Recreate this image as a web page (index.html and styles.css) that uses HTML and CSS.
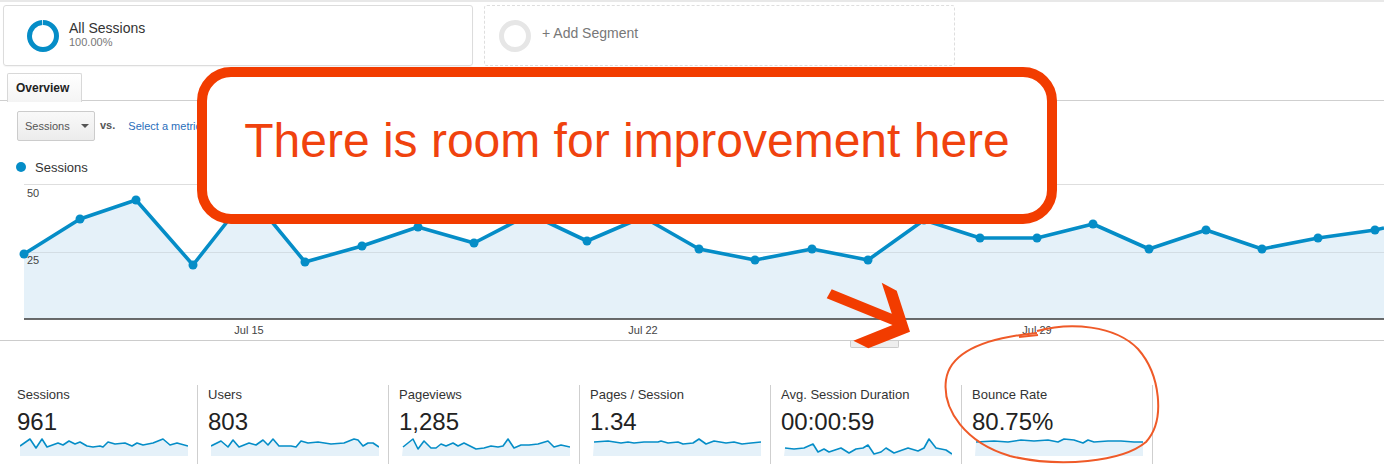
FILE: index.html
```html
<!DOCTYPE html>
<html>
<head>
<meta charset="utf-8">
<title>Audience Overview</title>
<link rel="stylesheet" href="styles.css">
</head>
<body>
<div class="page">
  <div class="segments">
    <div class="seg seg-active">
      <svg class="donut" width="32" height="32" viewBox="0 0 32 32"><circle cx="16" cy="16" r="13.5" fill="none" stroke="#058dc7" stroke-width="5" stroke-dasharray="83.5 1.3" transform="rotate(-90 16 16)"/></svg>
      <div class="seg-text">
        <div class="seg-name">All Sessions</div>
        <div class="seg-pct">100.00%</div>
      </div>
    </div>
    <div class="seg seg-add">
      <svg class="donut" width="32" height="32" viewBox="0 0 32 32"><circle cx="16" cy="16" r="13.5" fill="none" stroke="#e6e6e6" stroke-width="5"/></svg>
      <span class="seg-add-label">+ Add Segment</span>
    </div>
  </div>

  <div class="tabs"><div class="tab">Overview</div></div>

  <div class="controls">
    <div class="select"><span>Sessions</span><span class="caret"></span></div>
    <span class="vs">vs.</span>
    <span class="metric-link">Select a metric</span>
  </div>

  <div class="legend"><span class="dot"></span>Sessions</div>

  <svg class="chart" width="1384" height="160" viewBox="0 0 1384 160">
    <line x1="24" y1="4.5" x2="1384" y2="4.5" stroke="#dedede" stroke-width="1"/>
    <polygon fill="#e5f1f9" points="24,139 24,74 80,39 136,20 193,85 249,14 305,82 362,66 418,47 474,63 530,34 587,61 643,37 699,69 755,80 812,69 868,80 924,40 980,58 1037,58 1093,44 1149,69 1206,50 1262,69 1318,58 1375,50 1384,48 1384,139"/>
    <line x1="24" y1="72.5" x2="1384" y2="72.5" stroke="#d3dde4" stroke-width="1"/>
    <line x1="24" y1="139" x2="1384" y2="139" stroke="#3a3a3a" stroke-width="1.6"/>
    <polyline fill="none" stroke="#058dc7" stroke-width="3.6" stroke-linejoin="round" points="24,74 80,39 136,20 193,85 249,14 305,82 362,66 418,47 474,63 530,34 587,61 643,37 699,69 755,80 812,69 868,80 924,40 980,58 1037,58 1093,44 1149,69 1206,50 1262,69 1318,58 1375,50 1384,48"/>
    <g fill="#058dc7">
      <circle cx="24" cy="74" r="4.5"/><circle cx="80" cy="39" r="4.5"/><circle cx="136" cy="20" r="4.5"/><circle cx="193" cy="85" r="4.5"/><circle cx="249" cy="14" r="4.5"/><circle cx="305" cy="82" r="4.5"/><circle cx="362" cy="66" r="4.5"/><circle cx="418" cy="47" r="4.5"/><circle cx="474" cy="63" r="4.5"/><circle cx="530" cy="34" r="4.5"/><circle cx="587" cy="61" r="4.5"/><circle cx="643" cy="37" r="4.5"/><circle cx="699" cy="69" r="4.5"/><circle cx="755" cy="80" r="4.5"/><circle cx="812" cy="69" r="4.5"/><circle cx="868" cy="80" r="4.5"/><circle cx="924" cy="40" r="4.5"/><circle cx="980" cy="58" r="4.5"/><circle cx="1037" cy="58" r="4.5"/><circle cx="1093" cy="44" r="4.5"/><circle cx="1149" cy="69" r="4.5"/><circle cx="1206" cy="50" r="4.5"/><circle cx="1262" cy="69" r="4.5"/><circle cx="1318" cy="58" r="4.5"/><circle cx="1375" cy="50" r="4.5"/>
    </g>
    <g class="axis-text">
      <text x="27" y="17">50</text>
      <text x="27" y="84">25</text>
      <text x="249" y="154" text-anchor="middle">Jul 15</text>
      <text x="643" y="154" text-anchor="middle">Jul 22</text>
      <text x="1037" y="154" text-anchor="middle">Jul 29</text>
    </g>
  </svg>
  <div class="chart-foot"><div class="handle"></div></div>

  <div class="metrics">
    <div class="metric">
      <div class="m-label">Sessions</div>
      <div class="m-value">961</div>
      <svg class="spark" width="168" height="20" viewBox="0 0 168 20">
        <polygon class="spark-fill" points="0,20 0,10 10,3 16,12 22,3 27,11 38,7 43,9 49,5 55,8 60,6 67,10 73,11 80,10 83,11 88,6 95,8 105,7 112,10 117,7 123,9 133,7 143,3 150,9 157,7 168,10 168,20"/>
        <polyline class="spark-line" points="0,10 10,3 16,12 22,3 27,11 38,7 43,9 49,5 55,8 60,6 67,10 73,11 80,10 83,11 88,6 95,8 105,7 112,10 117,7 123,9 133,7 143,3 150,9 157,7 168,10"/>
      </svg>
    </div>
    <div class="metric">
      <div class="m-label">Users</div>
      <div class="m-value">803</div>
      <svg class="spark" width="168" height="20" viewBox="0 0 168 20">
        <polygon class="spark-fill" points="0,20 0,10 10,5 17,11 22,4 28,11 38,7 45,9 52,4 57,9 62,3 68,10 80,10 85,11 90,5 97,7 107,6 120,8 133,7 143,3 147,4 152,10 157,7 162,7 168,11 168,20"/>
        <polyline class="spark-line" points="0,10 10,5 17,11 22,4 28,11 38,7 45,9 52,4 57,9 62,3 68,10 80,10 85,11 90,5 97,7 107,6 120,8 133,7 143,3 147,4 152,10 157,7 162,7 168,11"/>
      </svg>
    </div>
    <div class="metric">
      <div class="m-label">Pageviews</div>
      <div class="m-value">1,285</div>
      <svg class="spark" width="168" height="20" viewBox="0 0 168 20">
        <polygon class="spark-fill" points="0,20 1,11 11,3 16,13 22,5 29,12 34,12 39,8 44,10 51,7 56,10 62,7 74,13 82,12 89,10 96,11 101,10 106,3 112,12 119,9 127,9 136,8 146,5 152,11 159,9 168,11 168,20"/>
        <polyline class="spark-line" points="1,11 11,3 16,13 22,5 29,12 34,12 39,8 44,10 51,7 56,10 62,7 74,13 82,12 89,10 96,11 101,10 106,3 112,12 119,9 127,9 136,8 146,5 152,11 159,9 168,11"/>
      </svg>
    </div>
    <div class="metric">
      <div class="m-label">Pages / Session</div>
      <div class="m-value">1.34</div>
      <svg class="spark" width="168" height="20" viewBox="0 0 168 20">
        <polygon class="spark-fill" points="0,20 1,6 15,5 28,7 35,6 41,7 51,6 65,6 68,5 75,7 85,6 90,8 100,7 106,3 113,8 121,5 133,7 141,6 149,8 158,7 168,6 168,20"/>
        <polyline class="spark-line" points="1,6 15,5 28,7 35,6 41,7 51,6 65,6 68,5 75,7 85,6 90,8 100,7 106,3 113,8 121,5 133,7 141,6 149,8 158,7 168,6"/>
      </svg>
    </div>
    <div class="metric">
      <div class="m-label">Avg. Session Duration</div>
      <div class="m-value">00:00:59</div>
      <svg class="spark" width="168" height="20" viewBox="0 0 168 20">
        <polygon class="spark-fill" points="0,20 1,12 10,13 20,12 29,8 34,16 40,13 45,16 57,12 65,17 72,13 79,12 84,9 90,18 97,16 102,12 110,17 124,12 134,15 140,12 145,3 152,12 162,14 168,18 168,20"/>
        <polyline class="spark-line" points="1,12 10,13 20,12 29,8 34,16 40,13 45,16 57,12 65,17 72,13 79,12 84,9 90,18 97,16 102,12 110,17 124,12 134,15 140,12 145,3 152,12 162,14 168,18"/>
      </svg>
    </div>
    <div class="metric">
      <div class="m-label">Bounce Rate</div>
      <div class="m-value">80.75%</div>
      <svg class="spark" width="168" height="20" viewBox="0 0 168 20">
        <polygon class="spark-fill" points="0,20 1,6 19,5 33,6 46,4 59,5 73,4 83,6 89,3 99,4 108,7 113,4 119,6 133,5 146,5 159,6 168,6 168,20"/>
        <polyline class="spark-line" points="1,6 19,5 33,6 46,4 59,5 73,4 83,6 89,3 99,4 108,7 113,4 119,6 133,5 146,5 159,6 168,6"/>
      </svg>
    </div>
  </div>

  <div class="callout">There is room for improvement here</div>

  <svg class="annot" width="1384" height="476" viewBox="0 0 1384 476">
    <polygon fill="#f23c00" points="831.7,289.3 891.8,313.7 881.7,282.7 896.7,290.7 910,331.7 868.3,348.3 853.3,340.7 892.5,325.1 826.7,298.3"/>
    <path d="M1037 331 C1070 322 1115 325 1138 349 C1160 374 1166 420 1146 442 C1122 462 1060 468 1010 456 C966 443 942 410 946 380 C950 352 985 338 1037 333" fill="none" stroke="#ef5a28" stroke-width="2"/>
    <path d="M1019 337 L1038 335" fill="none" stroke="#ef5a28" stroke-width="2"/>
  </svg>
</div>
</body>
</html>
```

FILE: styles.css
```css
* { box-sizing: border-box; }

html, body {
  margin: 0;
  padding: 0;
  background: #ffffff;
}

body {
  width: 1384px;
  height: 476px;
  overflow: hidden;
  font-family: "Liberation Sans", Arial, sans-serif;
  color: #333;
}

.page {
  position: relative;
  width: 1384px;
  height: 476px;
  border-top: 2px solid #e8e8e8;
}

/* Segments */
.segments {
  display: flex;
  gap: 11px;
  padding: 3px 0 0 3px;
}

.seg {
  height: 61px;
  display: flex;
  align-items: center;
  border-radius: 3px;
}

.seg-active {
  width: 470px;
  border: 1px solid #dcdcdc;
  padding-left: 23px;
  gap: 10px;
  box-shadow: 0 1px 1px rgba(0,0,0,0.04);
}

.seg-add {
  width: 471px;
  border: 1px dashed #dedede;
  padding-left: 14px;
  gap: 11px;
}

.donut { display: block; flex: none; }

.seg-text { margin-top: -3px; }

.seg-name {
  font-size: 14px;
  line-height: 16px;
  color: #333;
}

.seg-pct {
  font-size: 11px;
  line-height: 13px;
  color: #777;
}

.seg-add-label {
  font-size: 14px;
  color: #777;
  margin-top: -5px;
}

/* Tabs */
.tabs {
  margin-top: 6px;
  padding-left: 7px;
  border-bottom: 1px solid #cfcfcf;
  height: 29px;
}

.tab {
  width: 75px;
  height: 29px;
  border: 1px solid #d8d8d8;
  border-bottom: none;
  border-radius: 2px 2px 0 0;
  background: linear-gradient(#ffffff, #f4f4f4);
  padding: 7px 0 0 8px;
  font-size: 12px;
  font-weight: bold;
  color: #222;
  position: relative;
  top: 1px;
}

/* Controls */
.controls {
  display: flex;
  align-items: center;
  margin: 10px 0 0 17px;
  height: 30px;
}

.select {
  width: 78px;
  height: 30px;
  border: 1px solid #cccccc;
  border-radius: 2px;
  background: linear-gradient(#f9f9f9, #ececec);
  display: flex;
  align-items: center;
  padding-left: 7px;
  font-size: 11px;
  color: #555;
}

.caret {
  width: 0;
  height: 0;
  border-left: 4px solid transparent;
  border-right: 4px solid transparent;
  border-top: 4px solid #555;
  margin-left: 11px;
}

.vs {
  margin-left: 5px;
  font-size: 11px;
  font-weight: bold;
  color: #555;
  margin-top: -3px;
}

.metric-link {
  margin-left: 13px;
  font-size: 11px;
  color: #2a6ebb;
}

/* Legend */
.legend {
  display: flex;
  align-items: center;
  margin: 18px 0 0 16px;
  height: 16px;
  font-size: 13px;
  color: #333;
}

.dot {
  width: 10px;
  height: 10px;
  border-radius: 50%;
  background: #058dc7;
  margin-right: 9px;
}

/* Chart */
.chart {
  display: block;
  margin-top: 5px;
}

.axis-text {
  font-family: "Liberation Sans", Arial, sans-serif;
  font-size: 11px;
  fill: #444;
}

.chart-foot {
  border-top: 1px solid #cccccc;
  height: 8px;
}

.handle {
  margin-left: 850px;
  width: 49px;
  height: 7px;
  background: #eeeeee;
  border: 1px solid #cccccc;
  border-top: none;
  border-radius: 0 0 2px 2px;
}

/* Metrics */
.metrics {
  display: flex;
  margin: 37px 0 0 7px;
}

.metric {
  width: 191px;
  height: 79px;
  border-right: 1px solid #cfcfcf;
  padding: 2px 0 0 10px;
}

.m-label {
  font-size: 13px;
  line-height: 16px;
  color: #333;
}

.m-value {
  margin-top: 5px;
  font-size: 24px;
  line-height: 28px;
  color: #222;
}

.spark {
  display: block;
  margin: 0 0 0 3px;
}

.spark-fill { fill: #e5f1f9; }
.spark-line { fill: none; stroke: #058dc7; stroke-width: 1.6; stroke-linejoin: round; }

/* Annotations */
.callout {
  position: absolute;
  left: 197px;
  top: 65px;
  width: 860px;
  height: 157px;
  border: 10px solid #f23c00;
  border-radius: 34px;
  background: #ffffff;
  display: flex;
  align-items: center;
  justify-content: center;
  padding-bottom: 10px;
  font-size: 48px;
  color: #f0420e;
}

.annot {
  position: absolute;
  left: 0;
  top: -2px;
  pointer-events: none;
}
```
